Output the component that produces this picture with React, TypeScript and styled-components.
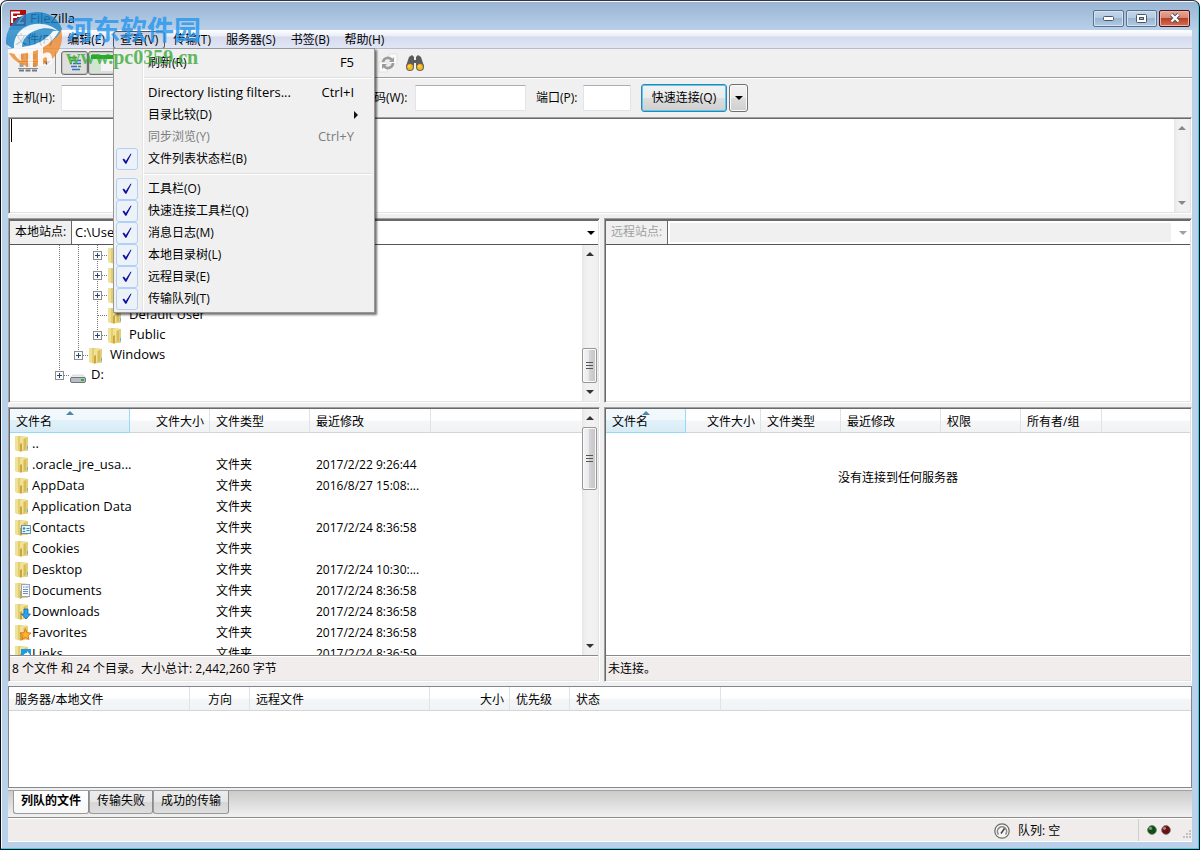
import React from "react";
import styled, { createGlobalStyle, css } from "styled-components";
import { RefreshCw, Settings, X, Unplug, Plug, Filter, Columns2 } from "lucide-react";

const GlobalStyle = createGlobalStyle`
  * { box-sizing: border-box; }
  body {
    margin: 0;
    background: #fff;
    color: #000;
    font-family: "Open Sans", "Noto Sans CJK SC", sans-serif;
    font-size: 12px;
    line-height: 16px;
  }
  button, input, select { font: inherit; color: inherit; margin: 0; }
`;

/* ---------- window frame ---------- */

const Window = styled.div`
  position: relative;
  display: flex;
  flex-direction: column;
  height: 100vh;
  padding: 0 7px 7px;
  border: 1px solid #0c1014;
  border-top-color: #38333c;
  border-radius: 7px 7px 0 0;
  background: linear-gradient(#98b4d2 0, #b9d1ea 30px, #b9d1ea 100%);
  box-shadow: inset -1px -1px 0 #2fd3ea, inset 1px 1px 0 #f4f9ff;
  overflow: hidden;
`;

const TitleBar = styled.header`
  display: flex;
  flex: none;
  align-items: center;
  height: 29px;
  padding: 4px 2px 0;
`;

const Title = styled.h1`
  flex: 1;
  margin: 0 0 0 4px;
  font-size: 13px;
  font-weight: 400;
  line-height: 18px;
`;

const WindowButtons = styled.div`
  display: flex;
  gap: 2px;
  padding-top: 1px;
`;

const WindowButton = styled.button<{ $close?: boolean }>`
  display: flex;
  align-items: center;
  justify-content: center;
  width: 31px;
  height: 17px;
  padding: 0;
  border-radius: 2px;
  ${(p) =>
    p.$close
      ? css`
          border: 1px solid #4d1216;
          background: linear-gradient(#e4a698 0, #d88672 48%, #b93f25 50%, #d4715a 100%);
          box-shadow: inset 0 0 0 1px #e9b3a6;
        `
      : css`
          border: 1px solid #5d718c;
          background: linear-gradient(#c3d6ea 0, #b4cbe3 48%, #98b5d1 50%, #b2cbe4 100%);
          box-shadow: inset 0 0 0 1px #d3e2f1;
        `}
`;

const Client = styled.main`
  display: flex;
  flex: 1;
  flex-direction: column;
  min-height: 0;
  background: #f0f0f0;
`;

/* ---------- menu bar and drop-down ---------- */

const MenuBar = styled.nav`
  display: flex;
  flex: none;
  gap: 1px;
  height: 19px;
  border-bottom: 1px solid #b6bccc;
  background: linear-gradient(#fff 0, #e9edf6 6px, #d5dbee 7px, #e1e6f5 18px);
`;

const MenuSlot = styled.div`
  position: relative;
`;

const MenuTitle = styled.button<{ $open?: boolean }>`
  height: 18px;
  margin-top: 1px;
  padding: 0 6px;
  border: 1px solid ${(p) => (p.$open ? "#4f5663" : "transparent")};
  border-radius: 3px;
  background: ${(p) => (p.$open ? "linear-gradient(#c9cede, #dde1ee)" : "none")};
  line-height: 16px;
  white-space: nowrap;
`;

const Menu = styled.div`
  position: absolute;
  z-index: 5;
  top: 18px;
  left: 0;
  width: 262px;
  padding: 3px 2px 2px;
  border: 1px solid #979797;
  background: linear-gradient(90deg, #f0f0f0 28px, #e2e3e3 28px, #e2e3e3 29px, #fff 29px, #fff 30px, #f0f0f0 30px);
  box-shadow: 2px 2px 2px rgba(0, 0, 0, 0.55);
`;

const MenuRow = styled.button<{ $dim?: boolean }>`
  display: grid;
  grid-template-columns: 22px 1fr auto;
  column-gap: 10px;
  align-items: center;
  width: 100%;
  height: 22px;
  padding: 0 18px 0 0;
  border: 0;
  background: none;
  color: ${(p) => (p.$dim ? "#7d7d7d" : "#000")};
  text-align: left;
`;

const MenuGap = styled.hr`
  height: 2px;
  margin: 3px 0 3px 28px;
  border: 0;
  border-top: 1px solid #e0e0e0;
  border-bottom: 1px solid #fff;
`;

const CheckCell = styled.span<{ $on?: boolean }>`
  display: flex;
  align-items: center;
  justify-content: center;
  height: 22px;
  border: 1px solid ${(p) => (p.$on ? "#afd0f7" : "transparent")};
  border-radius: 3px;
  background: ${(p) => (p.$on ? "#edf2f9" : "none")};
`;

const Latin = styled.span`
  padding-bottom: 2px;
  font-size: 13px;
`;

/* ---------- tool bars ---------- */

const ToolBar = styled.div`
  display: flex;
  flex: none;
  align-items: center;
  height: 29px;
  padding-left: 6px;
  border-bottom: 1px solid #a0a0a0;
`;

const ToolButton = styled.button<{ $on?: boolean }>`
  display: flex;
  flex: none;
  align-items: center;
  justify-content: center;
  width: 27px;
  height: 24px;
  padding: 0;
  border: 1px solid ${(p) => (p.$on ? "#6f6f6f" : "transparent")};
  border-radius: 3px;
  background: ${(p) => (p.$on ? "#dedede" : "none")};
  box-shadow: ${(p) => (p.$on ? "inset 0 0 0 1px #c6c6c6" : "none")};
`;

const ToolArrow = styled(ToolButton)`
  width: 12px;
`;

const ToolSeparator = styled.span`
  flex: none;
  width: 1px;
  height: 22px;
  margin: 0 5px 0 2px;
  background: #8e8e8e;
`;

const QuickBar = styled.form`
  display: flex;
  flex: none;
  align-items: center;
  height: 39px;
  padding-left: 4px;
  border-top: 1px solid #fff;
`;

const FieldLabel = styled.label<{ $w: number }>`
  flex: none;
  width: ${(p) => p.$w}px;
  white-space: nowrap;
`;

const Field = styled.input<{ $w: number }>`
  width: ${(p) => p.$w}px;
  height: 26px;
  margin-right: 10px;
  padding: 0 4px;
  border: 1px solid #e3e4ea;
  border-top-color: #abadb3;
  border-radius: 1px;
  background: #fff;
`;

const PushButton = styled.button<{ $primary?: boolean }>`
  display: flex;
  align-items: center;
  justify-content: center;
  height: 28px;
  padding: 0;
  border-radius: 3px;
  background: linear-gradient(#f2f2f2 0, #ebebeb 49%, #dddddd 50%, #cfcfcf 100%);
  ${(p) =>
    p.$primary
      ? css`
          width: 86px;
          margin-right: 2px;
          border: 1px solid #3c7fb1;
          box-shadow: inset 0 0 0 1px #48d1f2;
        `
      : css`
          width: 19px;
          border: 1px solid #707070;
          box-shadow: inset 0 0 0 1px #fafafa;
        `}
`;

/* ---------- sunken panes ---------- */

const Sunken = styled.section`
  display: flex;
  min-width: 0;
  min-height: 0;
  border: 1px solid;
  border-color: #a0a0a0 #fff #fff #a0a0a0;
  background: #fff;
  box-shadow: inset 1px 1px 0 #696969, inset -1px -1px 0 #e3e3e3;
  padding: 1px;
`;

const Log = styled(Sunken)`
  flex: none;
  height: 97px;
`;

const LogText = styled.textarea`
  flex: 1;
  padding: 0 1px;
  border: 0;
  outline: 0;
  resize: none;
  background: none;
  font: inherit;
`;

const Caret = styled.span`
  width: 1px;
  height: 23px;
  margin-left: 1px;
  background: #000;
`;

const Pair = styled.div<{ $grow?: boolean }>`
  display: grid;
  grid-template-columns: 148fr 147fr;
  column-gap: 4px;
  flex: ${(p) => (p.$grow ? "1 1 0" : "none")};
  min-height: 0;
  height: ${(p) => (p.$grow ? "auto" : "185px")};
  margin-top: 4px;
`;

const Pane = styled(Sunken)`
  flex-direction: column;
`;

const PathBar = styled.div<{ $off?: boolean }>`
  display: flex;
  flex: none;
  height: 25px;
  border-top: 1px solid #696969;
  border-bottom: 1px solid #555;
  color: ${(p) => (p.$off ? "#a0a0a0" : "#000")};
`;

const PathLabel = styled.label`
  flex: none;
  width: 62px;
  padding: 3px 0 0 5px;
  border-right: 1px solid #696969;
  background: #f0f0f0;
  white-space: nowrap;
`;

const Combo = styled.div`
  position: relative;
  flex: 1;
  min-width: 0;
  padding: 2px;
  background: #fff;
`;

const ComboSelect = styled.select`
  display: block;
  width: 100%;
  height: 19px;
  padding: 0 1px 2px;
  border: 0;
  appearance: none;
  background: #fff;
  font-size: 13px;
  line-height: 16px;
  opacity: 1;
  &:disabled {
    width: calc(100% - 17px);
    background: #f0f0f0;
  }
`;

const ComboArrow = styled.span`
  position: absolute;
  top: 6px;
  right: 3px;
  display: flex;
  height: 12px;
  align-items: center;
  pointer-events: none;
`;

const PaneBody = styled.div`
  display: flex;
  flex: 1;
  min-height: 0;
  overflow: hidden;
`;

const Scroll = styled.div`
  display: flex;
  flex: none;
  flex-direction: column;
  justify-content: space-between;
  width: 16px;
  background: linear-gradient(90deg, #e5e5e5, #efefef 3px, #f2f2f2 50%, #efefef);
`;

const ScrollButton = styled.button`
  display: flex;
  flex: none;
  align-items: center;
  justify-content: center;
  width: 16px;
  height: 18px;
  padding: 0;
  border: 0;
  background: none;
`;

const ScrollTrack = styled.div<{ $end?: boolean }>`
  display: flex;
  flex: 1;
  flex-direction: column;
  justify-content: ${(p) => (p.$end ? "flex-end" : "flex-start")};
`;

const Thumb = styled.div<{ $h: number }>`
  display: flex;
  align-items: center;
  justify-content: center;
  width: 15px;
  height: ${(p) => p.$h}px;
  border: 1px solid #979797;
  border-radius: 2px;
  background: linear-gradient(90deg, #f5f5f5 0, #e9e9eb 45%, #d3d3d6 50%, #c4c4c8 100%);
  box-shadow: inset 0 0 0 1px #fafafa;
`;

/* ---------- directory tree ---------- */

const Tree = styled.ul`
  flex: 1;
  margin: 0;
  padding: 0 0 0 40px;
  list-style: none;
`;

const TreeRow = styled.li`
  display: flex;
  align-items: center;
  height: 20px;
  font-size: 13px;
  white-space: nowrap;
`;

const ItemName = styled.span`
  padding-bottom: 2px;
`;

const TreeIcon = styled.span`
  display: flex;
  flex: none;
  width: 22px;
  padding-left: 1px;
`;

/* ---------- lists ---------- */

const ListArea = styled.div`
  flex: 1;
  min-width: 0;
  overflow: hidden;
`;

const List = styled.table`
  width: 100%;
  border-collapse: separate;
  border-spacing: 0;
  table-layout: fixed;
`;

const Head = styled.th<{ $align?: string; $sorted?: boolean }>`
  position: relative;
  height: 24px;
  padding: 2px 5px 0 6px;
  border-right: 1px solid #e0e3e6;
  border-bottom: 1px solid #d5d5d5;
  background: linear-gradient(#fff 0, #fff 48%, #f5f6f8 52%, #f1f2f4 100%);
  font-weight: 400;
  text-align: ${(p) => p.$align || "left"};
  white-space: nowrap;
  ${(p) =>
    p.$sorted &&
    css`
      border-color: #96d9f9;
      background: linear-gradient(#f2f9fc 0, #f0f8fc 45%, #e1f1f9 50%, #d8ecf6 100%);
    `}
  &:last-child { border-right: 0; }
`;

const SortMark = styled.svg`
  position: absolute;
  top: 2px;
  left: 50%;
  margin-left: -4px;
`;

const Cell = styled.td`
  height: 21px;
  padding: 0 0 0 6px;
  white-space: nowrap;
`;

const NameCell = styled.div`
  display: flex;
  align-items: center;
  gap: 1px;
  margin-left: -1px;
  font-size: 13px;
  svg { flex: none; }
`;

const EmptyNote = styled.p`
  margin: 37px 0 0;
  text-align: center;
`;

const PaneStatus = styled.div`
  flex: none;
  height: 25px;
  padding: 5px 2px 3px;
  border-top: 1px solid #8a8a8a;
  background: #f1edec;
  box-shadow: inset 0 1px 0 #fff;
  white-space: nowrap;
`;

/* ---------- queue ---------- */

const Queue = styled.section`
  flex: none;
  height: 102px;
  margin-top: 4px;
  border: 1px solid #828790;
  background: #fff;
  overflow: hidden;
`;

const TabStrip = styled.div`
  display: flex;
  flex: none;
  align-items: flex-start;
  height: 28px;
  margin-top: 2px;
  padding-left: 5px;
  border-top: 1px solid #a0a0a0;
  border-bottom: 1px solid #8c8c8c;
  background: linear-gradient(#cbcbcb, #f1f1f1);
`;

const Tab = styled.button<{ $active?: boolean }>`
  height: 23px;
  padding: 0 7px 3px;
  border: 1px solid #9a9a9a;
  border-top: 0;
  border-right-color: #8c8c8c;
  border-radius: 0 0 3px 3px;
  background: ${(p) =>
    p.$active ? "linear-gradient(#fff, #f7f7f7)" : "linear-gradient(#ececec 0, #e6e6e6 48%, #d6d6d6 50%, #dedede 100%)"};
  font-weight: ${(p) => (p.$active ? 700 : 400)};
  line-height: 16px;
  white-space: nowrap;
`;

const StatusBar = styled.footer`
  display: flex;
  flex: none;
  align-items: center;
  justify-content: flex-end;
  height: 24px;
  border-top: 1px solid #fff;
  border-bottom: 1px solid #fff;
  background: #f0ecec;
`;

const QueueState = styled.div`
  display: flex;
  align-items: center;
  gap: 8px;
  width: 144px;
  padding-top: 1px;
`;

const Leds = styled.div`
  display: flex;
  align-items: center;
  gap: 4px;
  height: 100%;
  width: 54px;
  padding-left: 8px;
  border-left: 1px solid #cfcfcf;
`;

const Grip = styled.svg`
  margin: 10px 0 0 7px;
`;

/* ---------- site stamp ---------- */

const Stamp = styled.div`
  position: absolute;
  z-index: 9;
  top: 10px;
  left: 4px;
  display: flex;
  gap: 3px;
  pointer-events: none;
`;

const StampWords = styled.div`
  padding-top: 1px;
  white-space: nowrap;
`;

const StampName = styled.div`
  color: #2496ee;
  font-family: "Noto Sans CJK SC", sans-serif;
  font-size: 27px;
  font-weight: 700;
  line-height: 34px;
  opacity: 0.8;
`;

const StampSite = styled.div`
  color: #3bab3b;
  font-family: "Liberation Serif", serif;
  font-size: 20px;
  font-weight: 700;
  line-height: 22px;
  opacity: 0.8;
`;

/* ---------- drawings ---------- */

const AppIcon = () => (
  <svg width="16" height="16" viewBox="0 0 16 16" aria-hidden="true">
    <rect width="16" height="16" fill="#b40a0a" />
    <path d="M2 13V2.500h8M2 7h5" stroke="#fff" strokeWidth="2.200" fill="none" />
    <path d="M7 6h6l-5 7h6" stroke="#fff" strokeWidth="1.800" fill="none" />
  </svg>
);

const StampLogo = () => (
  <svg width="58" height="58" viewBox="0 0 58 58" aria-hidden="true" opacity="0.8">
    <path d="M56 18c4 15-4 33-24 37C20 57 9 51 4 42c16 2 38-4 52-24z" fill="#ef8a2b" />
    <path d="M1 33C0 15 14 1 32 1c12 0 22 7 25 17-3 6-7 10-12 13L8 38z" fill="#1b84c6" />
    <path d="M2 41c0 0 4-4 7-4-1-11 6-20 16-23 11-3 22 0 28 6-6-3-14-4-21-1-10 3-15 10-15 17 14-1 25-8 31-16h6C47 33 33 43 10 43z" fill="#fff" opacity="0.95" />
    <path d="M9 42l7-1v9c-3-2-6-5-7-8zM23 40l5-2v18h-5zM33 36l5-3v10c5-3 9-1 9 4v5l-5 3v-7c0-3-4-2-4 1v6h-5z" fill="#fff" opacity="0.95" />
  </svg>
);

const Triangle = ({ up, color = "#222" }: { up?: boolean; color?: string }) => (
  <svg width="8" height="4" viewBox="0 0 8 4" aria-hidden="true">
    <path d={up ? "M0 4L4 0l4 4z" : "M0 0h8L4 4z"} fill={color} />
  </svg>
);

const Tick = () => (
  <svg width="12" height="12" viewBox="0 0 12 12" aria-hidden="true">
    <path d="M1.500 6.500L3 5.500 4.800 8 9.600 0.800h1L5.400 10.800H4.300z" fill="#0c12a1" />
  </svg>
);

const FolderIcon = ({ badge }: { badge?: string }) => (
  <svg width="16" height="17" viewBox="0 0 16 17" aria-hidden="true">
    <path d="M0 1.500L5 1l8 1v13.500l-7 1-6-1.500z" fill="#e6d27c" />
    <path d="M0 1.500L3 1v15l-3-1z" fill="#efe196" />
    <path d="M3 1l3 .500v15L3 16z" fill="#e4cd70" />
    <path d="M5 2l6-.500V13l-5 3.500H5z" fill="#f0e294" />
    <path d="M5 9l2-1v8l-2 .500z" fill="#caa63e" />
    <path d="M8.500 4L11 3v11l-2.500 1.500z" fill="#d9bc58" />
    <path d="M11 2l2 1v12.500l-2 .500z" fill="#e3ce7a" />
    {!badge && <path d="M12 11h1v3h-1z" fill="#55b5ee" />}
    {badge === "contact" && (
      <g>
        <rect x="6.500" y="6.500" width="9" height="8" fill="#e7f3fb" stroke="#5f93b5" />
        <circle cx="9" cy="9.500" r="1.200" fill="#3d87b8" />
        <path d="M7.800 12.500h2.500M11.500 9.500h3M11.500 11.500h3" stroke="#3d87b8" />
      </g>
    )}
    {badge === "doc" && (
      <g>
        <rect x="6.500" y="2.500" width="8" height="12" fill="#f7f9fc" stroke="#9aa6b8" />
        <path d="M8 5h1.500M10.500 5h3M8 7.500h5M8 9.500h5M8 11.500h5" stroke="#6d8fc4" />
      </g>
    )}
    {badge === "down" && <path d="M9 6h4v5h2.500L11 16 6.500 11H9z" fill="#2ba4ef" stroke="#1569b3" strokeWidth="0.800" />}
    {badge === "star" && (
      <path d="M10.500 5l1.500 3.700 4 .300-3 2.500 1 4-3.500-2.200L7 15.500l1-4L5 9l4-.300z" fill="#ffb52e" stroke="#e06c12" strokeWidth="0.900" />
    )}
    {badge === "link" && (
      <g>
        <rect x="6" y="4" width="10" height="11" fill="#199be8" />
        <path d="M8 13c0-4 2-5 4-5V6l3 3.500L12 13v-2c-2 0-3 0-4 2z" fill="#fff" />
      </g>
    )}
  </svg>
);

const DriveIcon = () => (
  <svg width="16" height="16" viewBox="0 0 16 16" aria-hidden="true">
    <path d="M3 8h10l2.500 3h-15z" fill="#eceef0" stroke="#c2c5c9" strokeWidth="0.600" />
    <rect x="0.500" y="10.500" width="15" height="5" rx="1.500" fill="#b9bcc2" stroke="#70747c" />
    <rect x="11" y="12" width="3" height="2" fill="#27b327" />
  </svg>
);

type Guide = "line" | "tee" | "plus" | "last";

const GuideMark = ({ kind }: { kind: Guide }) => (
  <svg width="19" height="20" viewBox="0 0 19 20" aria-hidden="true">
    <path
      d={kind === "last" ? "M9.500 0v10" : "M9.500 0v20"}
      stroke="#777"
      strokeDasharray="1 1"
      fill="none"
    />
    {kind !== "line" && <path d="M10 10.500h9" stroke="#777" strokeDasharray="1 1" />}
    {(kind === "plus" || kind === "last") && (
      <g>
        <rect x="5.500" y="6.500" width="8" height="8" fill="#fafafa" stroke="#8c8c8c" />
        <path d="M7 10.500h5M9.500 8v5" stroke="#2b4478" />
      </g>
    )}
  </svg>
);

const SitesIcon = () => (
  <svg width="22" height="20" viewBox="0 0 22 20" aria-hidden="true">
    <path d="M4.500 1v5M11 1v5M17.500 1v5" stroke="#b5b5b5" strokeWidth="4" />
    <path d="M1 8.500h20M1 15.500h20" stroke="#8a8a8a" />
    <path d="M4.500 10v4M11 10v4M17.500 10v4" stroke="#a2a2a2" strokeWidth="4" />
    <path d="M2 17.500h5M8.500 17.500h5M15 17.500h5" stroke="#777" strokeWidth="2" />
  </svg>
);

const LogIcon = () => (
  <svg width="16" height="16" viewBox="0 0 16 16" aria-hidden="true">
    <path d="M2 2.500h8M4 5.500h5" stroke="#37a337" strokeWidth="1.500" />
    <path d="M10 5.500h4M6 8.500h8M4 11.500h6M5 14.500h8" stroke="#3670c8" strokeWidth="1.500" />
    <path d="M3 8.500h2M11 11.500h3" stroke="#37a337" strokeWidth="1.500" />
  </svg>
);

const TreePaneIcon = () => (
  <svg width="22" height="16" viewBox="0 0 22 16" aria-hidden="true">
    <rect width="22" height="16" fill="#f4f4f4" />
    <rect width="10" height="16" fill="#cfe6cf" />
    <rect width="22" height="4" fill="#1fae1f" />
  </svg>
);

const SyncIcon = () => (
  <svg width="20" height="20" viewBox="0 0 20 20" aria-hidden="true">
    <path d="M11 1h8v10h-8zM1 9h8v10H1z" fill="#fafafa" stroke="#e2e2e2" />
    <path d="M5 9a5 5 0 0 1 9-2" fill="none" stroke="#9b9b9b" strokeWidth="2.600" />
    <path d="M15 10a5 5 0 0 1-9 3" fill="none" stroke="#9b9b9b" strokeWidth="2.600" />
    <path d="M16 4v5h-5zM4 16v-5h5z" fill="#9b9b9b" />
  </svg>
);

const FindIcon = () => (
  <svg width="20" height="18" viewBox="0 0 20 18" aria-hidden="true">
    <path d="M4 3l3-2 2 2v3h2V3l2-2 3 2 3 9-4 3-4-3V9H9v3l-4 3-4-3z" fill="#5b5b5b" />
    <circle cx="5" cy="13" r="4" fill="#666" />
    <circle cx="15" cy="13" r="4" fill="#666" />
    <circle cx="5" cy="13" r="2.900" fill="#ffb80f" />
    <circle cx="15" cy="13" r="2.900" fill="#ffb80f" />
    <circle cx="4.300" cy="12.200" r="1" fill="#ffe08a" />
    <circle cx="14.300" cy="12.200" r="1" fill="#ffe08a" />
  </svg>
);

const GaugeIcon = () => (
  <svg width="16" height="16" viewBox="0 0 16 16" aria-hidden="true">
    <circle cx="8" cy="8" r="7.200" fill="#f5f5f5" stroke="#6a6a6a" strokeWidth="1.200" />
    <path d="M4.500 11.500a4.600 4.600 0 1 1 7 0" fill="none" stroke="#8a8a8a" strokeWidth="1.600" />
    <path d="M7 10.500L10.500 5.500" stroke="#444" strokeWidth="1.500" />
  </svg>
);

const Led = ({ color, name }: { color: string; name: string }) => (
  <svg width="10" height="10" viewBox="0 0 10 10" role="img" aria-label={name}>
    <circle cx="5" cy="5" r="4.400" fill={color} stroke="#777" strokeWidth="0.800" />
    <circle cx="3.500" cy="3.300" r="1.600" fill="#fff" opacity="0.450" />
  </svg>
);

/* ---------- parts ---------- */

type MenuEntry = { text: string; keys?: string; latin?: boolean; checked?: boolean; dim?: boolean; sub?: boolean } | null;

const viewMenu: MenuEntry[] = [
  { text: "刷新(R)", keys: "F5" },
  null,
  { text: "Directory listing filters...", keys: "Ctrl+I", latin: true },
  { text: "目录比较(D)", sub: true },
  { text: "同步浏览(Y)", keys: "Ctrl+Y", dim: true },
  { text: "文件列表状态栏(B)", checked: true },
  null,
  { text: "工具栏(O)", checked: true },
  { text: "快速连接工具栏(Q)", checked: true },
  { text: "消息日志(M)", checked: true },
  { text: "本地目录树(L)", checked: true },
  { text: "远程目录(E)", checked: true },
  { text: "传输队列(T)", checked: true },
];

const SubArrow = styled.svg`
  margin-right: -10px;
`;

const ViewMenu = () => (
  <Menu role="menu">
    {viewMenu.map((item, i) =>
      item === null ? (
        <MenuGap key={i} />
      ) : (
        <MenuRow key={i} role={item.checked ? "menuitemcheckbox" : "menuitem"} $dim={item.dim} disabled={item.dim}>
          <CheckCell $on={item.checked}>{item.checked && <Tick />}</CheckCell>
          {item.latin ? <Latin>{item.text}</Latin> : <span>{item.text}</span>}
          {item.keys && <Latin>{item.keys}</Latin>}
          {item.sub && (
            <SubArrow width="4" height="8" viewBox="0 0 4 8" aria-hidden="true">
              <path d="M0 0l4 4-4 4z" fill="#111" />
            </SubArrow>
          )}
        </MenuRow>
      )
    )}
  </Menu>
);

const menus = ["文件(F)", "编辑(E)", "查看(V)", "传输(T)", "服务器(S)", "书签(B)", "帮助(H)"];

const ScrollBar = ({ thumb, end, dim }: { thumb?: number; end?: boolean; dim?: boolean }) => (
  <Scroll>
    <ScrollButton aria-label="向上滚动">
      <Triangle up color={dim ? "#888" : "#333"} />
    </ScrollButton>
    <ScrollTrack $end={end}>
      {thumb && (
        <Thumb $h={thumb}>
          <svg width="7" height="8" viewBox="0 0 7 8" aria-hidden="true">
            <path d="M0 .500h7M0 3.500h7M0 6.500h7" stroke="#555" />
          </svg>
        </Thumb>
      )}
    </ScrollTrack>
    <ScrollButton aria-label="向下滚动">
      <Triangle color={dim ? "#888" : "#333"} />
    </ScrollButton>
  </Scroll>
);

type Column = { text: string; width?: number; align?: string; sorted?: boolean };

const localColumns: Column[] = [
  { text: "文件名", width: 120, sorted: true },
  { text: "文件大小", width: 80, align: "right" },
  { text: "文件类型", width: 100 },
  { text: "最近修改", width: 121 },
  { text: "" },
];

const remoteColumns: Column[] = [
  { text: "文件名", width: 80, sorted: true },
  { text: "文件大小", width: 75, align: "right" },
  { text: "文件类型", width: 80 },
  { text: "最近修改", width: 100 },
  { text: "权限", width: 80 },
  { text: "所有者/组", width: 81 },
  { text: "" },
];

const queueColumns: Column[] = [
  { text: "服务器/本地文件", width: 181 },
  { text: "方向", width: 60, align: "center" },
  { text: "远程文件", width: 180 },
  { text: "大小", width: 80, align: "right" },
  { text: "优先级", width: 60 },
  { text: "状态", width: 151 },
  { text: "" },
];

const Columns = ({ columns }: { columns: Column[] }) => (
  <>
    <colgroup>
      {columns.map((c, i) => (
        <col key={i} width={c.width} />
      ))}
    </colgroup>
    <thead>
      <tr>
        {columns.map((c, i) => (
          <Head key={i} $align={c.align} $sorted={c.sorted}>
            {c.sorted && (
              <SortMark width="8" height="4" viewBox="0 0 8 4" aria-hidden="true">
                <path d="M0 4l4-4 4 4z" fill="#4f86a8" />
              </SortMark>
            )}
            {c.text}
          </Head>
        ))}
      </tr>
    </thead>
  </>
);

const files: { name: string; date?: string; badge?: string; up?: boolean }[] = [
  { name: "..", up: true },
  { name: ".oracle_jre_usa...", date: "2017/2/22 9:26:44" },
  { name: "AppData", date: "2016/8/27 15:08:..." },
  { name: "Application Data" },
  { name: "Contacts", date: "2017/2/24 8:36:58", badge: "contact" },
  { name: "Cookies" },
  { name: "Desktop", date: "2017/2/24 10:30:..." },
  { name: "Documents", date: "2017/2/24 8:36:58", badge: "doc" },
  { name: "Downloads", date: "2017/2/24 8:36:58", badge: "down" },
  { name: "Favorites", date: "2017/2/24 8:36:58", badge: "star" },
  { name: "Links", date: "2017/2/24 8:36:59", badge: "link" },
];

const tree: { name: string; guides: Guide[]; drive?: boolean }[] = [
  { name: "Administrator", guides: ["line", "line", "plus"] },
  { name: "All Users", guides: ["line", "line", "plus"] },
  { name: "Default", guides: ["line", "line", "plus"] },
  { name: "Default User", guides: ["line", "line", "tee"] },
  { name: "Public", guides: ["line", "line", "last"] },
  { name: "Windows", guides: ["line", "last"] },
  { name: "D:", guides: ["last"], drive: true },
];

export default function App() {
  return (
    <>
      <GlobalStyle />
      <Window>
        <TitleBar>
          <AppIcon />
          <Title>FileZilla</Title>
          <WindowButtons>
            <WindowButton aria-label="最小化">
              <svg width="11" height="5" viewBox="0 0 11 5" aria-hidden="true">
                <rect x="0.500" y="0.500" width="10" height="4" rx="1" fill="#fff" stroke="#4a5568" />
              </svg>
            </WindowButton>
            <WindowButton aria-label="最大化">
              <svg width="11" height="9" viewBox="0 0 11 9" aria-hidden="true">
                <rect x="0.500" y="0.500" width="10" height="8" rx="1" fill="#fff" stroke="#4a5568" />
                <rect x="3.500" y="3.500" width="4" height="2" fill="#9db8d4" stroke="#4a5568" />
              </svg>
            </WindowButton>
            <WindowButton aria-label="关闭" $close>
              <svg width="12" height="10" viewBox="0 0 12 10" aria-hidden="true">
                <path d="M2.500 1.500l7 7M9.500 1.500l-7 7" stroke="#4a4a5c" strokeWidth="4" />
                <path d="M2.500 1.500l7 7M9.500 1.500l-7 7" stroke="#fff" strokeWidth="2.400" />
              </svg>
            </WindowButton>
          </WindowButtons>
        </TitleBar>

        <Client>
          <MenuBar>
            {menus.map((m, i) => (
              <MenuSlot key={m}>
                <MenuTitle $open={i === 2}>{m}</MenuTitle>
                {i === 2 && <ViewMenu />}
              </MenuSlot>
            ))}
          </MenuBar>

          <ToolBar>
            <ToolButton aria-label="站点管理器"><SitesIcon /></ToolButton>
            <ToolArrow aria-label="站点列表"><Triangle color="#555" /></ToolArrow>
            <ToolSeparator />
            <ToolButton $on aria-label="消息日志"><LogIcon /></ToolButton>
            <ToolButton $on aria-label="本地目录树"><TreePaneIcon /></ToolButton>
            <ToolButton $on aria-label="远程目录树"><TreePaneIcon /></ToolButton>
            <ToolButton $on aria-label="传输队列"><LogIcon /></ToolButton>
            <ToolSeparator />
            <ToolButton aria-label="刷新"><RefreshCw size={16} /></ToolButton>
            <ToolButton aria-label="处理队列"><Settings size={16} /></ToolButton>
            <ToolButton aria-label="取消"><X size={16} /></ToolButton>
            <ToolButton aria-label="断开"><Unplug size={16} /></ToolButton>
            <ToolButton aria-label="重新连接"><Plug size={16} /></ToolButton>
            <ToolSeparator />
            <ToolButton aria-label="过滤"><Filter size={16} /></ToolButton>
            <ToolButton aria-label="比较"><Columns2 size={16} /></ToolButton>
            <ToolButton aria-label="同步浏览"><SyncIcon /></ToolButton>
            <ToolButton aria-label="查找"><FindIcon /></ToolButton>
          </ToolBar>

          <QuickBar onSubmit={(e) => e.preventDefault()}>
            <FieldLabel htmlFor="host" $w={49}>主机(H):</FieldLabel>
            <Field id="host" $w={110} />
            <FieldLabel htmlFor="user" $w={61}>用户名(U):</FieldLabel>
            <Field id="user" $w={110} />
            <FieldLabel htmlFor="pass" $w={53}>密码(W):</FieldLabel>
            <Field id="pass" type="password" $w={111} />
            <FieldLabel htmlFor="port" $w={47}>端口(P):</FieldLabel>
            <Field id="port" $w={48} />
            <PushButton $primary type="submit">快速连接(Q)</PushButton>
            <PushButton type="button" aria-label="历史记录"><Triangle color="#000" /></PushButton>
          </QuickBar>

          <Log>
            <Caret />
            <LogText aria-label="消息日志" readOnly />
            <ScrollBar dim />
          </Log>

          <Pair>
            <Pane>
              <PathBar>
                <PathLabel htmlFor="local">本地站点:</PathLabel>
                <Combo>
                  <ComboSelect id="local">
                    <option>C:\Users\Administrator\</option>
                  </ComboSelect>
                  <ComboArrow><Triangle color="#000" /></ComboArrow>
                </Combo>
              </PathBar>
              <PaneBody>
                <Tree>
                  {tree.map((t) => (
                    <TreeRow key={t.name}>
                      {t.guides.map((g, i) => (
                        <GuideMark key={i} kind={g} />
                      ))}
                      <TreeIcon>{t.drive ? <DriveIcon /> : <FolderIcon />}</TreeIcon>
                      <ItemName>{t.name}</ItemName>
                    </TreeRow>
                  ))}
                </Tree>
                <ScrollBar thumb={35} end />
              </PaneBody>
            </Pane>
            <Pane>
              <PathBar $off>
                <PathLabel htmlFor="remote">远程站点:</PathLabel>
                <Combo>
                  <ComboSelect id="remote" disabled />
                  <ComboArrow><Triangle color="#a0a0a0" /></ComboArrow>
                </Combo>
              </PathBar>
              <PaneBody />
            </Pane>
          </Pair>

          <Pair $grow>
            <Pane>
              <PaneBody>
                <ListArea>
                  <List>
                    <Columns columns={localColumns} />
                    <tbody>
                      {files.map((f) => (
                        <tr key={f.name}>
                          <Cell>
                            <NameCell>
                              <FolderIcon badge={f.badge} />
                              <ItemName>{f.name}</ItemName>
                            </NameCell>
                          </Cell>
                          <Cell />
                          <Cell>{f.up ? "" : "文件夹"}</Cell>
                          <Cell>{f.date}</Cell>
                          <Cell />
                        </tr>
                      ))}
                    </tbody>
                  </List>
                </ListArea>
                <ScrollBar thumb={63} />
              </PaneBody>
              <PaneStatus>8 个文件 和 24 个目录。大小总计: 2,442,260 字节</PaneStatus>
            </Pane>
            <Pane>
              <PaneBody>
                <ListArea>
                  <List>
                    <Columns columns={remoteColumns} />
                  </List>
                  <EmptyNote>没有连接到任何服务器</EmptyNote>
                </ListArea>
              </PaneBody>
              <PaneStatus>未连接。</PaneStatus>
            </Pane>
          </Pair>

          <Queue>
            <List>
              <Columns columns={queueColumns} />
            </List>
          </Queue>

          <TabStrip role="tablist">
            <Tab role="tab" aria-selected $active>列队的文件</Tab>
            <Tab role="tab">传输失败</Tab>
            <Tab role="tab">成功的传输</Tab>
          </TabStrip>

          <StatusBar>
            <QueueState>
              <GaugeIcon />
              队列: 空
            </QueueState>
            <Leds>
              <Led color="#0e4f12" name="接收" />
              <Led color="#6b0f0f" name="发送" />
              <Grip width="10" height="10" viewBox="0 0 10 10" aria-hidden="true">
                <path d="M7 1h2M4 4h2M7 4h2M1 7h2M4 7h2M7 7h2" stroke="#c4c0c0" strokeWidth="2" />
              </Grip>
            </Leds>
          </StatusBar>
        </Client>

        <Stamp>
          <StampLogo />
          <StampWords>
            <StampName>河东软件园</StampName>
            <StampSite>www.pc0359.cn</StampSite>
          </StampWords>
        </Stamp>
      </Window>
    </>
  );
}
